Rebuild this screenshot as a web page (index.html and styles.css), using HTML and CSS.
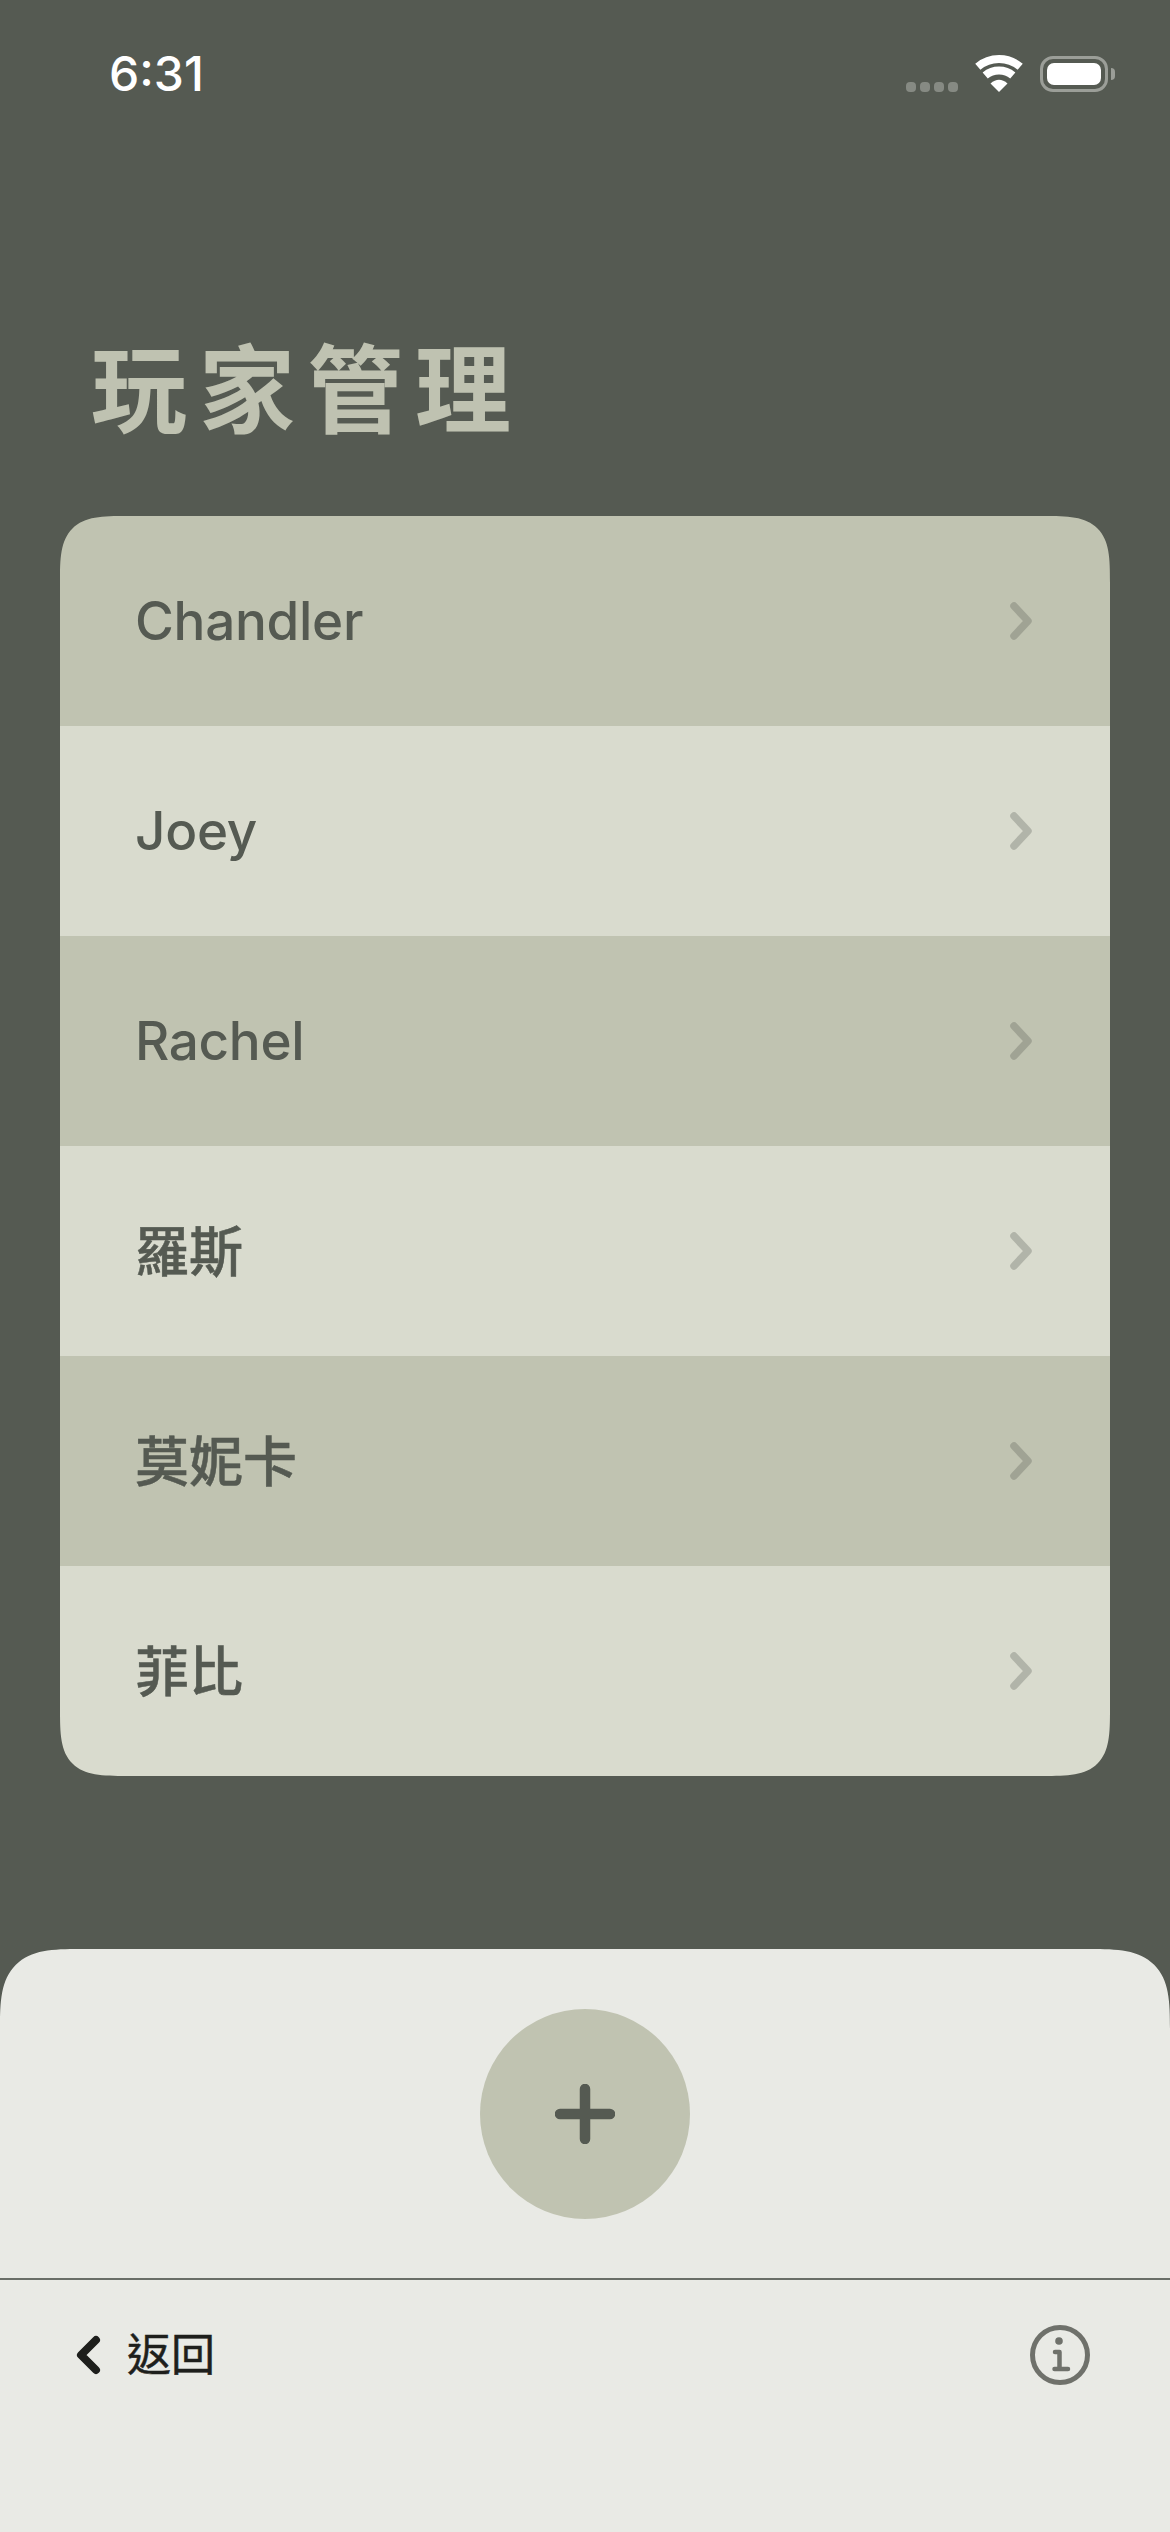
FILE: index.html
```html
<!DOCTYPE html>
<html lang="zh-Hant">
<head>
  <meta charset="UTF-8">
  <meta name="viewport" content="width=device-width, initial-scale=1.0">
  <title>玩家管理</title>
  <link rel="stylesheet" href="styles.css">
</head>
<body>
  <div class="status-bar">
    <span class="time">6:31</span>
    <div class="status-icons">
      <div class="signal"><i></i><i></i><i></i><i></i></div>
      <svg class="wifi" width="48" height="37" viewBox="0 0 48 37">
        <path d="M2.8 11.8A33 33 0 0 1 45.2 11.8" fill="none" stroke="#fff" stroke-width="8"/>
        <path d="M10.2 20.5A21.5 21.5 0 0 1 37.8 20.5" fill="none" stroke="#fff" stroke-width="8"/>
        <path d="M24 37L15.5 28.5Q24 21 32.500 28.5Z" fill="#fff"/>
      </svg>
      <div class="battery"><div class="battery-fill"></div></div>
      <div class="battery-cap"></div>
    </div>
  </div>

  <h1 class="title">玩家管理</h1>

  <ul class="players">
    <li class="player"><span>Chandler</span>
      <svg class="chevron" width="30" height="44" viewBox="0 0 30 44"><path d="M8 7L22 22L8 37"/></svg></li>
    <li class="player"><span>Joey</span>
      <svg class="chevron" width="30" height="44" viewBox="0 0 30 44"><path d="M8 7L22 22L8 37"/></svg></li>
    <li class="player"><span>Rachel</span>
      <svg class="chevron" width="30" height="44" viewBox="0 0 30 44"><path d="M8 7L22 22L8 37"/></svg></li>
    <li class="player"><span class="cjk">羅斯</span>
      <svg class="chevron" width="30" height="44" viewBox="0 0 30 44"><path d="M8 7L22 22L8 37"/></svg></li>
    <li class="player"><span class="cjk">莫妮卡</span>
      <svg class="chevron" width="30" height="44" viewBox="0 0 30 44"><path d="M8 7L22 22L8 37"/></svg></li>
    <li class="player"><span class="cjk">菲比</span>
      <svg class="chevron" width="30" height="44" viewBox="0 0 30 44"><path d="M8 7L22 22L8 37"/></svg></li>
  </ul>

  <div class="sheet">
    <div class="add-row">
      <button class="add-btn">
        <svg width="60" height="60" viewBox="0 0 60 60"><path d="M5 30H55M30 5V55"/></svg>
      </button>
    </div>
    <div class="toolbar">
      <div class="back">
        <svg width="30" height="44" viewBox="0 0 30 44"><path d="M23 7L8 22L23 37"/></svg>
        <span class="cjk">返回</span>
      </div>
      <svg class="info" width="60" height="60" viewBox="0 0 60 60">
        <circle cx="30" cy="30" r="27.5"/>
        <circle class="info-dot" cx="29" cy="16" r="3.800"/>
        <path d="M25 27H29.500V44M24.500 44H38"/>
      </svg>
    </div>
  </div>
</body>
</html>
```

FILE: styles.css
```css
* {
  box-sizing: border-box;
}
body {
  margin: 0;
  width: 1170px;
  height: 2532px;
  display: flex;
  flex-direction: column;
  overflow: hidden;
  background-color: #555A52;
  font-family: Inter, "Noto Sans CJK TC", sans-serif;
}
.status-bar {
  height: 92px;
  margin-top: 46px;
  padding: 0 55px 0 109px;
  display: flex;
  justify-content: space-between;
  align-items: flex-start;
}
.time {
  color: #fff;
  font-size: 48px;
  font-weight: 500;
  line-height: 56px;
}
.status-icons {
  margin-top: 9px;
  display: flex;
  align-items: flex-end;
}
.signal {
  display: flex;
  gap: 4px;
  margin-right: 17px;
}
.signal i {
  width: 10px;
  height: 10px;
  border-radius: 4px;
  background-color: #868A83;
}
.battery {
  width: 68px;
  height: 36px;
  margin-left: 17px;
  padding: 4px;
  border: 3.5px solid #9B9E98;
  border-radius: 13px;
}
.battery-fill {
  width: 100%;
  height: 100%;
  background-color: #fff;
  border-radius: 7px;
}
.battery-cap {
  width: 4px;
  height: 12px;
  margin: 0 0 12px 3px;
  background-color: #9B9E98;
  border-radius: 0 4px 4px 0;
}
.title {
  margin: 188px 0 0 91px;
  height: 190px;
  color: #BFC2B1;
  font-family: "Noto Sans CJK TC", sans-serif;
  font-size: 96px;
  font-weight: 700;
  letter-spacing: 12px;
  line-height: 116px;
}
.players {
  list-style: none;
  margin: 0 60px;
  padding: 0;
  border-radius: 67px;
  corner-shape: superellipse(1.75);
  overflow: hidden;
}
.player {
  height: 210px;
  padding: 0 74px 0 75px;
  display: flex;
  justify-content: space-between;
  align-items: center;
  background-color: #D9DBCE;
  color: #555A52;
  font-size: 53px;
  font-weight: 500;
  letter-spacing: -0.3px;
}
.player:nth-child(odd) {
  background-color: #C0C3B1;
}
.cjk {
  margin-top: -6px;
  -webkit-text-stroke: 0.5px currentColor;
}
.player .cjk {
  font-size: 54px;
  letter-spacing: 0;
}
.chevron path {
  fill: none;
  stroke: #555A52;
  stroke-opacity: 0.3;
  stroke-width: 7.5;
  stroke-linecap: round;
  stroke-linejoin: round;
}
.sheet {
  margin-top: auto;
  height: 583px;
  background-color: #E9EAE5;
  border-radius: 80px 80px 0 0;
  corner-shape: superellipse(1.65);
}
.add-row {
  height: 331px;
  padding-top: 60px;
  display: flex;
  justify-content: center;
  border-bottom: 2px solid #6A6E67;
}
.add-btn {
  width: 210px;
  height: 210px;
  padding: 0;
  border: none;
  border-radius: 50%;
  background-color: #C0C3B1;
  display: flex;
  justify-content: center;
  align-items: center;
}
.add-btn path {
  fill: none;
  stroke: #555A52;
  stroke-width: 10.500;
  stroke-linecap: round;
}
.toolbar {
  padding: 45px 80px 0 73px;
  display: flex;
  justify-content: space-between;
  align-items: center;
}
.back {
  display: flex;
  align-items: center;
  gap: 24px;
  color: #1E1F1C;
  font-size: 44px;
}
.back path {
  fill: none;
  stroke: #1E1F1C;
  stroke-width: 8;
  stroke-linecap: round;
  stroke-linejoin: round;
}
.info {
  fill: none;
  stroke: #6F716B;
  stroke-width: 5;
}
.info path {
  stroke-width: 4.500;
  stroke-linecap: round;
  stroke-linejoin: round;
}
.info-dot {
  fill: #6F716B;
  stroke: none;
}
```
